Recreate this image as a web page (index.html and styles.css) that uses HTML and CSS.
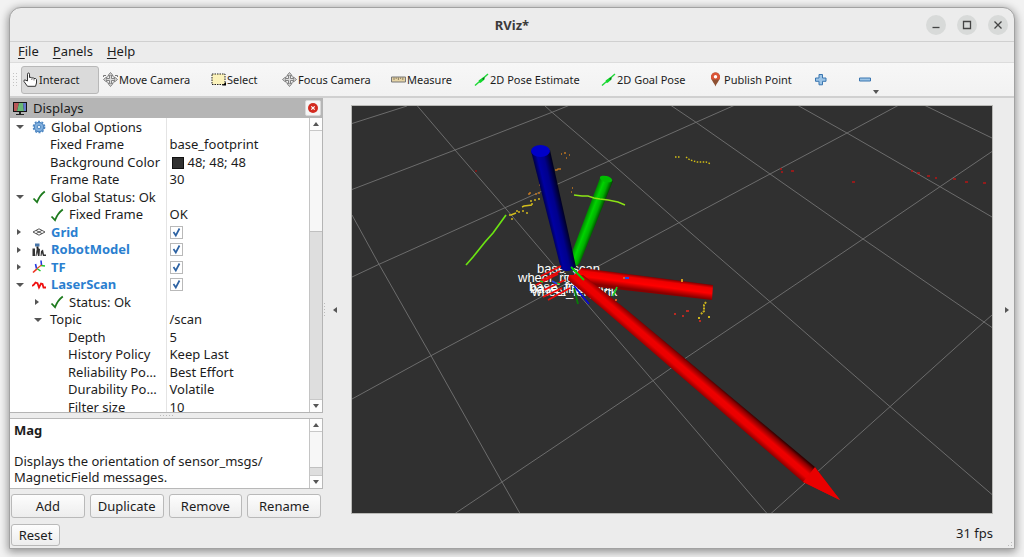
FILE: index.html
```html
<!DOCTYPE html>
<html lang="en">
<head>
<meta charset="utf-8">
<title>RViz*</title>
<link rel="stylesheet" href="styles.css">
</head>
<body>
<svg class="defs" aria-hidden="true">
  <symbol id="i-check" viewBox="0 0 14 14"><path d="M1.500 8.500 5 12.200C7 7 9.300 4 12.800 1.500" fill="none" stroke="#1d7a1d" stroke-width="1.800"/></symbol>
  <symbol id="i-arrow" viewBox="0 0 15 15"><path d="M1 13.500 14 2M5 10.500 10 5.500" stroke="#22d83a" stroke-width="1.500" fill="none"/><path d="m4.500 8.500 4.500-3 2 1.500-4.500 4z" fill="#12d82c"/><path d="m8.500 6 2.500-.500-2 3z" fill="#087018"/></symbol>
  <symbol id="i-cross" viewBox="0 0 15 15"><path d="M7.500.500 10 3.500H8.500V6.500H11.500V5L14.500 7.500 11.500 10V8.500H8.500v3H10L7.500 14.500 5 11.500H6.500v-3H3.500V10L.500 7.500 3.500 5V6.500h3v-3H5z" fill="#ddd" stroke="#777" stroke-width=".9"/><circle cx="7.500" cy="7.500" r="4.200" fill="none" stroke="#888" stroke-width="1"/></symbol>
</svg>
<div class="window">
  <header class="titlebar">
    <h1>RViz*</h1>
    <div class="controls">
      <button type="button" aria-label="Minimize"><svg viewBox="0 0 20 20"><path d="M6.500 12.500h7" /></svg></button>
      <button type="button" aria-label="Maximize"><svg viewBox="0 0 20 20"><path d="M6.500 6.500h7v7h-7z"/></svg></button>
      <button type="button" aria-label="Close"><svg viewBox="0 0 20 20"><path d="m6.500 6.500 7 7m0-7-7 7"/></svg></button>
    </div>
  </header>

  <nav class="menubar">
    <button type="button"><u>F</u>ile</button>
    <button type="button"><u>P</u>anels</button>
    <button type="button"><u>H</u>elp</button>
  </nav>

  <div class="toolbar" role="toolbar">
    <span class="grip"></span>
    <button type="button" class="active"><svg viewBox="0 0 15 15"><path d="M4.500 9V2.200q0-1.200 1-1.200t1 1.200V5.500q2-.700 2.300.500 1.700-.600 2.200.500 2-.500 2.500 1V11l-1 3.300H4.500L1 9.500Q.600 7.800 2 7.900z" fill="#fff" stroke="#333" stroke-width="1"/><path d="M8.800 6.500V8M11 7v1.500" stroke="#555" stroke-width=".8"/></svg>Interact</button>
    <button type="button"><svg viewBox="0 0 15 15"><use href="#i-cross"/><path d="M.500 5v-1.500H3M12 3.500h2.500V5" stroke="#777" fill="none"/></svg>Move Camera</button>
    <button type="button"><svg viewBox="0 0 15 15"><path d="M1 2h13v10.500H1z" fill="#fbf2bb" stroke="#222" stroke-dasharray="1.500 1"/><path d="M15 10v3.500h-4z"/></svg>Select</button>
    <button type="button"><svg viewBox="0 0 15 15"><use href="#i-cross"/></svg>Focus Camera</button>
    <button type="button"><svg viewBox="0 0 15 15"><path d="M.500 5h14v5H.500z" fill="#e6d4a5" stroke="#777"/><path d="M3 5.500V8m2.200-2.500V7m2.200-1.500V8m2.200-2.500V7m2.200-1.500V8" stroke="#776a55" stroke-width=".8"/></svg>Measure</button>
    <button type="button"><svg><use href="#i-arrow"/></svg>2D Pose Estimate</button>
    <button type="button"><svg><use href="#i-arrow"/></svg>2D Goal Pose</button>
    <button type="button"><svg viewBox="0 0 15 15"><path d="M7.500 14.500C6.500 11 3 8.500 3 5a4.500 4.500 0 0 1 9 0c0 3.500-3.500 6-4.500 9.500z" fill="#8e5032"/><path d="M3 5a4.500 4.500 0 0 1 9 0q0 1.500-.700 2.500H3.700Q3 6.500 3 5z" fill="#db5537"/><circle cx="7.500" cy="4.800" r="1.700" fill="#fff"/></svg>Publish Point</button>
    <button type="button" aria-label="Add tool"><svg viewBox="0 0 15 15"><path d="M6 2.500h3.500V6H13v3.300H9.500v3.500H6V9.300H2.500V6H6z" fill="#9cc4e6" stroke="#3b76b0"/></svg></button>
    <button type="button" aria-label="Remove tool" class="has-menu"><svg viewBox="0 0 15 15"><path d="M2.500 6h11v3h-11z" fill="#9cc4e6" stroke="#3b76b0"/></svg><i class="tri down"></i></button>
  </div>

  <main class="body">
    <section class="dock">
      <header class="dock-title">
        <svg viewBox="0 0 16 15"><path d="M1 1h14v10H1z" fill="#151515"/><path d="M2 2h5L5 10H2z" fill="#b85858"/><path d="M7 2h4l1 8H5z" fill="#69b878"/><path d="M11 2h3v8h-2z" fill="#6679cd"/><path d="M7 11h2v2h3v1H4v-1h3z" fill="#222"/></svg>
        <h2>Displays</h2>
        <button type="button" aria-label="Close displays"><svg viewBox="0 0 14 14"><circle cx="7" cy="7" r="5" fill="#d32b20"/><path d="m5.300 5.300 3.400 3.400m0-3.400L5.300 8.700" stroke="#fff" stroke-width="1.200"/></svg></button>
      </header>

      <div class="tree-pane">
        <div class="tree-view">
        <table class="tree">
          <colgroup><col class="names"><col></colgroup>
          <tbody>
          <tr><td><div class="cell"><i class="tri down"></i><svg viewBox="0 0 14 14"><circle cx="7" cy="7" r="4.700" fill="#82b0de" stroke="#4e87c2" stroke-width="1.200"/><circle cx="7" cy="7" r="5.700" fill="none" stroke="#4e87c2" stroke-width="1.300" stroke-dasharray="2 1.600"/><circle cx="7" cy="7" r="1.800" fill="#e3effa" stroke="#4e87c2"/></svg><span>Global Options</span></div></td><td></td></tr>
          <tr><td><div class="cell l1"><span>Fixed Frame</span></div></td><td>base_footprint</td></tr>
          <tr><td><div class="cell l1"><span>Background Color</span></div></td><td><i class="swatch"></i>48; 48; 48</td></tr>
          <tr><td><div class="cell l1"><span>Frame Rate</span></div></td><td>30</td></tr>
          <tr><td><div class="cell"><i class="tri down"></i><svg><use href="#i-check"/></svg><span>Global Status: Ok</span></div></td><td></td></tr>
          <tr><td><div class="cell l1"><svg><use href="#i-check"/></svg><span>Fixed Frame</span></div></td><td>OK</td></tr>
          <tr><td><div class="cell"><i class="tri"></i><svg viewBox="0 0 14 14"><path d="m1 7 6-3.200L13 7l-6 3.200zM4 5.400l6 3.200m0-3.200L4 8.600" fill="none" stroke="#444" stroke-width=".9"/></svg><label for="d-grid">Grid</label></div></td><td><input type="checkbox" id="d-grid" checked></td></tr>
          <tr><td><div class="cell"><i class="tri"></i><svg viewBox="0 0 14 14"><path d="M.500 5.500H3V13H.500zM5 4.500 8 6l-.500 7H6L5 9l-.500 4h-1zM9 8l2-1.500 1 5h2v1.500h-3l-1-3-.500 3H8.500z" fill="#333"/><path d="M3 .500h4.500v3H3z" fill="#4775a8"/><path d="M4.500 3.500h2v2h-2z" fill="#222"/></svg><label for="d-robot">RobotModel</label></div></td><td><input type="checkbox" id="d-robot" checked></td></tr>
          <tr><td><div class="cell"><i class="tri"></i><svg viewBox="0 0 14 14"><path d="m1 12.500 4-3.700" stroke="#e32" stroke-width="1.600"/><path d="m5 8.500 3.500 2.500M9 5.500l4 .500" stroke="#1fc72f" stroke-width="1.500"/><path d="M4.500 8.500 3.500 4M9.500 5 9 .500" stroke="#2438e0" stroke-width="1.600"/><path d="m5 8.500 4.500-3.500" stroke="#d52" stroke-width="1.100"/></svg><label for="d-tf">TF</label></div></td><td><input type="checkbox" id="d-tf" checked></td></tr>
          <tr><td><div class="cell"><i class="tri down"></i><svg viewBox="0 0 14 14"><path d="M0 8 2 6.500 3.500 4.500 5.500 5.200 7 9.500 9 5.500 10.500 6 11.500 9.500H14" fill="none" stroke="#ef1010" stroke-width="1.800"/></svg><label for="d-laser">LaserScan</label></div></td><td><input type="checkbox" id="d-laser" checked></td></tr>
          <tr><td><div class="cell l1"><i class="tri"></i><svg><use href="#i-check"/></svg><span>Status: Ok</span></div></td><td></td></tr>
          <tr><td><div class="cell l1"><i class="tri down"></i><span>Topic</span></div></td><td>/scan</td></tr>
          <tr><td><div class="cell l2"><span>Depth</span></div></td><td>5</td></tr>
          <tr><td><div class="cell l2"><span>History Policy</span></div></td><td>Keep Last</td></tr>
          <tr><td><div class="cell l2"><span>Reliability Po…</span></div></td><td>Best Effort</td></tr>
          <tr><td><div class="cell l2"><span>Durability Po…</span></div></td><td>Volatile</td></tr>
          <tr><td><div class="cell l2"><span>Filter size</span></div></td><td>10</td></tr>
          </tbody>
        </table>
        </div>
        <div class="scrollbar"><span class="end"><i class="tri up"></i></span><span class="track"></span><span class="thumb"></span><span class="end"><i class="tri down"></i></span></div>
      </div>

      <div class="splitter"><span class="dots"></span></div>

      <div class="about">
        <div class="about-text"><h3>Mag</h3><p>Displays the orientation of sensor_msgs/<wbr>MagneticField messages.</p></div>
        <div class="scrollbar"><span class="end"><i class="tri up"></i></span><span class="track"></span><span class="thumb small"></span><span class="end"><i class="tri down"></i></span></div>
      </div>

      <div class="actions">
        <button type="button" class="btn">Add</button>
        <button type="button" class="btn">Duplicate</button>
        <button type="button" class="btn">Remove</button>
        <button type="button" class="btn">Rename</button>
      </div>
    </section>

    <div class="rail left"><span class="dots tall"></span><i class="tri back"></i></div>
    <section class="viewport" aria-label="3D view">
      <svg viewBox="352 106 640 407" preserveAspectRatio="xMidYMid slice">
        <defs>
          <linearGradient id="blue" gradientUnits="userSpaceOnUse" x1="546" y1="212" x2="563" y2="208"><stop offset="0" stop-color="#00004c"/><stop offset=".25" stop-color="#0000a2"/><stop offset=".6" stop-color="#00008c"/><stop offset="1" stop-color="#000020"/></linearGradient>
          <linearGradient id="green" gradientUnits="userSpaceOnUse" x1="586" y1="214" x2="599" y2="219"><stop offset="0" stop-color="#008000"/><stop offset=".35" stop-color="#00d400"/><stop offset=".65" stop-color="#00b000"/><stop offset="1" stop-color="#003800"/></linearGradient>
          <linearGradient id="red" gradientUnits="userSpaceOnUse" x1="672" y1="279" x2="670" y2="294"><stop offset="0" stop-color="#600"/><stop offset=".25" stop-color="#e00"/><stop offset=".6" stop-color="#f00"/><stop offset="1" stop-color="#800"/></linearGradient>
          <linearGradient id="long" gradientUnits="userSpaceOnUse" x1="718" y1="385" x2="706" y2="399"><stop offset="0" stop-color="#300"/><stop offset=".15" stop-color="#800"/><stop offset=".45" stop-color="#e00"/><stop offset=".7" stop-color="#ea0000"/><stop offset="1" stop-color="#800"/></linearGradient>
        </defs>
        <g class="grid">
          <path d="M352 123.500 407 106M352 189.500 455 150 552 112.300 570 105M352 277 379 264.300 505 207.700 609 161 696 122.300 734 105.500M352 399 431 355.700 517 310 679 222.700 770 174 847 133 898 105.500M455 513.500 502 482 653 380.700 685 358.500 770 301.700 863 239 940 186.700 992 151.500M771 513.500 818 471.300 890 406.700 984 322 992 315"/>
          <path d="M352 215 379 264.300 431 355.700 502 482 520 513.500M417 105.500 455 150 505 207.700 592 310 653 380.700 767 513.500M544 105 552 112.300 609 161 679 222.700 770 301.700 890 406.700 992 494.500M671 105.500 696 122.300 770 174 863 239 984 322 992 327.500M798 105.500 847 133 940 186.700 992 217M925 105.500 992 138"/>
        </g>
        <g fill="none" stroke-width="1.400">
          <path d="m466 265 7-8 12-15 8-9 13-18" stroke="#6be312" stroke-width="1.700"/>
          <path d="M509 215h2l5-2M522 207l2-1 8-1" stroke="#d3be1c"/>
          <path d="M511 219h2M516 211h2M518 212h2M522 211h2M526 213h2M530 201h2M534 200h2M538 199h2M531 204h2" stroke="#cdb41e"/>
          <path d="M528 194h2M529 193h2M535 194h2M539 185h2M538 193h2M555 170h2l1-1h3M561 154h1M564 153h2M569 155h1M566 158h1M572 188h1M571 192h1" stroke="#bd7420"/>
          <path d="M475 171h2" stroke="#901010"/>
          <path d="M675 157h6M686 157l4 3 7 2h9l5 2" stroke="#d2be16" stroke-dasharray="1.500 1.500"/>
          <path d="M780 169h2M781 172h2M791 171h3M852 182h3M911 171h2M917 173h3M927 176h3M935 178h2M953 179h3M965 182h3M983 183h3" stroke="#b51414"/>
        </g>
        <g class="frames">
          <text x="537" y="273">base_scan</text>
          <text x="518" y="282">wheel_right_link</text>
          <text x="529" y="291">base_footprint</text>
          <text x="530" y="293">base_link</text>
          <text x="532" y="296">wheel_left_link</text>
        </g>
        <path d="m600 178-28 74v18l8-7 33-82z" fill="url(#green)"/>
        <ellipse cx="606" cy="179" rx="6.300" ry="3" transform="rotate(15 606 179)" fill="#00bd00"/>
        <path d="m574 195 8 1h6l6 2 6 1 8 1 10 2 7 3" fill="none" stroke="#8be315" stroke-width="1.400"/>
        <path d="m582 268 131 17-1 15-124-14-18-8z" fill="url(#red)"/>
        <path d="M531 151 561 269q7 5 15-2L550 150z" fill="url(#blue)"/>
        <ellipse cx="540.500" cy="151" rx="9.500" ry="6" fill="#0000c8"/>
        <path d="M569 275 583 275 627 310 815 467 840 500 803 482 604 310 568 280z" fill="url(#long)"/>
        <path d="M803 482 815 467 840 500z" fill="#e90000"/>
        <g fill="none" stroke-width="1.800">
          <path d="m541 276 20-10M536 285l22-11M544 290l21-10M543 297l19-9M548 300l22-12M540 281l20-10" stroke="#ec0808"/>
          <path d="m571 267 13 13" stroke="#08d308"/>
          <path d="m574 286 15 18" stroke="#0808d8"/>
          <path d="m574 288 4 16" stroke="#087c08"/>
          <path d="m617 287-4 9M540 281l3 1M556 283l4 1" stroke="#18c924"/>
          <path d="m552 281 5 3M625 278h4" stroke="#2545e8"/>
          <path d="M623 278h2M615 300h2" stroke="#dd5a22"/>
          <path d="M682 279v3" stroke="#e3a41c"/>
        </g>
        <path d="m706 302-2 3v6l-3 3M708 317h2M698 318h2" fill="none" stroke="#c9b21c" stroke-width="2" stroke-dasharray="2 1"/>
        <path d="M674 314h2M682 316h2M686 311h3M699 321h2" stroke="#b92a22" stroke-width="2"/>
      </svg>
    </section>
    <div class="rail right"><i class="tri"></i></div>
  </main>

  <footer class="status"><button type="button" class="btn">Reset</button><output>31 fps</output><span class="resize"></span></footer>
</div>
</body>
</html>
```
FILE: styles.css
```css
* { box-sizing: border-box; }
body {
  margin: 0;
  min-height: 100vh;
  padding: 7px 9px 8px 9px;
  display: flex;
  background: #f2f2f2;
  font: 13px/18px "Noto Sans", "Open Sans", sans-serif;
  color: #1c1c1c;
}
h1, h2, h3, p { margin: 0; font-size: inherit; font-weight: inherit; }
button { font: inherit; color: inherit; border: 0; padding: 0; background: none; white-space: nowrap; }
.defs { display: none; }

.window {
  flex: 1;
  min-width: 0;
  display: flex;
  flex-direction: column;
  background: #ececec;
  border: 1px solid #a2a2a2;
  border-radius: 12px 12px 0 0;
  box-shadow: 0 2px 8px 1px #0006;
}
.titlebar {
  display: grid;
  grid-template-columns: 1fr auto 1fr;
  align-items: center;
  height: 34px;
  padding: 0 6px;
  border-bottom: 1px solid #d0d0d0;
}
.titlebar h1 { grid-column: 2; font-weight: 700; color: #3b3b3b; }
.controls { justify-self: end; display: flex; gap: 11px; }
.controls button { width: 20px; height: 20px; border-radius: 50%; background: #d8dad9; }
.controls svg { display: block; fill: none; stroke: #444; stroke-width: 1.300; }

.menubar { display: flex; align-items: flex-start; gap: 14px; height: 21px; padding: 0 8px; border-bottom: 1px solid #dcdcdc; }
.menubar u { text-underline-offset: 2px; }

.toolbar {
  display: grid;
  grid-template-columns: 11px 82px 108px 71px 109px 83px 127px 107px 105px 44px 24px;
  align-items: center;
  height: 35px;
  background: linear-gradient(#f7f7f7, #f2f2f2);
  border-bottom: 2px solid #d0d0d0;
  font-size: 11px;
}
.toolbar button { display: flex; align-items: center; gap: 1px; height: 28px; }
.toolbar svg { width: 15px; height: 15px; flex: none; }
.toolbar .active { width: 78px; padding-left: 1px; border: 1px solid #b8b8b8; border-radius: 3px; background: #dadada; }
.toolbar .has-menu .tri { align-self: flex-end; }
.grip { width: 6px; height: 16px; margin-left: 2px; background: radial-gradient(#c4c4c4 1px, transparent 1px) 0 0 / 3px 3px; }

.tri { width: 0; height: 0; flex: none; border: 3px solid transparent; border-left: 4px solid #555; border-right: 0; }
.tri.back { border: 3px solid transparent; border-right: 4px solid #555; border-left: 0; }
.tri.down { border: 3px solid transparent; border-top: 4px solid #555; border-bottom: 0; }
.tri.up { border: 3px solid transparent; border-bottom: 4px solid #555; border-top: 0; }

.body { flex: 1; min-height: 0; display: flex; }
.dock { width: 313px; display: flex; flex-direction: column; flex: none; }
.dock-title { display: flex; align-items: center; gap: 5px; height: 20px; padding: 0 2px; background: #b5b5b5; }
.dock-title svg { width: 16px; height: 15px; }
.dock-title h2 { flex: 1; }
.dock-title button { width: 16px; height: 16px; border: 1px solid #d8d8d8; border-radius: 2px; background: #f5f5f5; }
.dock-title button svg { display: block; width: 14px; height: 14px; }

.tree-pane { flex: 1 1 0; min-height: 0; display: flex; background: #fff; border-right: 1px solid #b4b4b4; border-bottom: 1px solid #b4b4b4; }
.tree-view { flex: 1; min-width: 0; overflow: hidden; }
.tree { width: 100%; table-layout: fixed; border-collapse: collapse; }
.names { width: 156px; }
.tree td { height: 18px; line-height: 17px; padding: 0 0 0 3px; white-space: nowrap; vertical-align: middle; }
.tree tr:nth-child(even) td { height: 17px; }
.tree td:first-child { padding: 0; border-right: 1px solid #e4e4e4; overflow: hidden; }
.cell { display: flex; align-items: center; padding-left: 22px; }
.cell.l1 { padding-left: 40px; }
.cell.l2 { padding-left: 58px; }
.cell .tri { margin: 0 11px 0 -15px; }
.cell .tri.down { width: 8px; margin: 0 8px 0 -16px; border-left-width: 4px; border-right-width: 4px; }
.cell svg { width: 14px; height: 14px; margin-right: 5px; flex: none; }
.cell label { font-weight: 700; color: #2b7fd0; }
.swatch { display: inline-block; width: 12px; height: 12px; margin: 0 4px 0 2px; vertical-align: -2px; background: #303030; border: 1px solid #111; }
.tree input {
  appearance: none;
  display: block;
  width: 13px;
  height: 13px;
  margin: 0;
  border: 1px solid #b9b9b9;
  background: #fff url("data:image/svg+xml,%3Csvg xmlns='http://www.w3.org/2000/svg' viewBox='0 0 11 11'%3E%3Cpath d='M2.500 5 4.800 8.500 8.500 1.500' fill='none' stroke='%232d62a3' stroke-width='1.700'/%3E%3C/svg%3E");
}

.scrollbar { width: 13px; flex: none; display: flex; flex-direction: column; border-left: 1px solid #c4c4c4; background: #f7f7f7; }
.end { height: 13px; display: flex; align-items: center; justify-content: center; background: #fdfdfd; border-bottom: 1px solid #c8c8c8; }
.end:last-child { border-bottom: 0; border-top: 1px solid #c8c8c8; }
.track { flex: 1; }
.thumb { flex: 0 0 57%; border-top: 1px solid #c0c0c0; background: #dedede; }
.thumb.small { flex-basis: 8px; }

.splitter { height: 5px; display: flex; justify-content: center; align-items: center; }
.dots { width: 16px; height: 4px; background: radial-gradient(#bbb 1px, transparent 1px) 0 0 / 3px 3px; }
.dots.tall { width: 4px; height: 16px; }

.about { display: flex; height: 71px; background: #fff; border: 1px solid #b8b8b8; border-left: 0; }
.about-text { flex: 1; padding: 3px 4px; line-height: 16px; }
.about h3 { font-weight: 700; margin-bottom: 15px; }

.actions { display: grid; grid-template-columns: repeat(4, 1fr); gap: 5px; padding: 5px 2px 3px 1px; }
.btn { height: 24px; border: 1px solid #b9b9b9; border-radius: 3px; background: linear-gradient(#fdfdfd, #ededed); }

.rail { display: flex; align-items: center; flex: none; }
.rail.left { width: 29px; gap: 6px; }
.rail.right { width: 22px; padding-left: 13px; }
.viewport { flex: 1; min-width: 0; margin: 8px 0; background: #303030; overflow: hidden; outline: 1px solid #b9b9b6; }
.viewport svg { display: block; width: 100%; height: 100%; }
.grid { fill: none; stroke: #6c6c6c; stroke-width: 1; }
.frames { fill: #fff; font: 13px "Liberation Sans", sans-serif; }

.status { display: flex; align-items: flex-start; justify-content: space-between; height: 27px; padding: 3px 0 0 1px; }
.status .btn { width: 49px; height: 22px; }
.status output { margin-left: auto; padding-right: 11px; }
.resize { width: 10px; height: 10px; align-self: flex-end; background: radial-gradient(#bbb 1px, transparent 1px) 0 0 / 3px 3px; clip-path: polygon(100% 0, 100% 100%, 0 100%); }
```
